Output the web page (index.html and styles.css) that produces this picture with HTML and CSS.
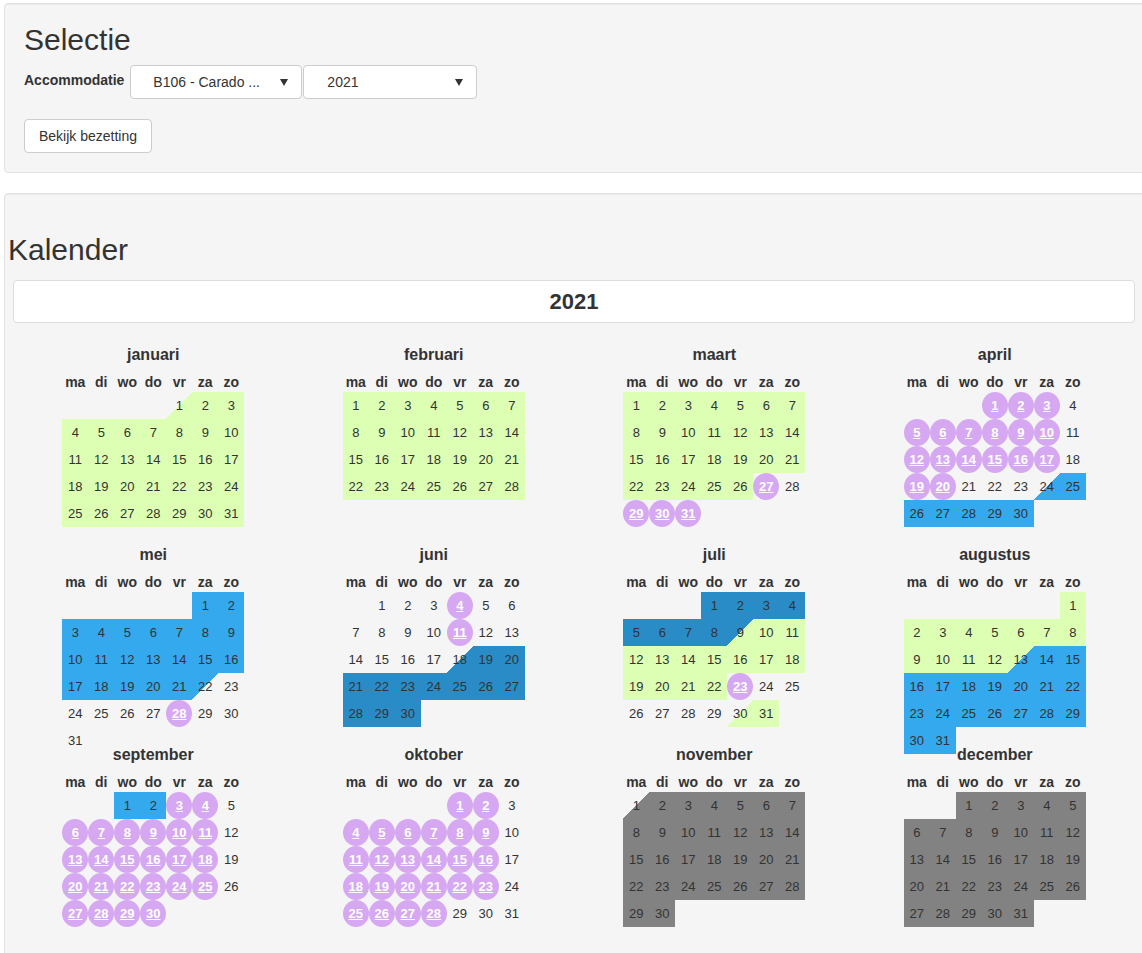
FILE: index.html
```html
<!DOCTYPE html>
<html lang="nl">
<head>
    <meta charset="UTF-8">
    <meta name="viewport" content="width=device-width, initial-scale=1.0">
    <title>Bezetting</title>
    <link rel="stylesheet" href="styles.css">
</head>
<body>
    <div class="well selection">
        <h2>Selectie</h2>
        <div class="form-row">
            <label>Accommodatie</label>
            <div class="select select-acc">
                <span>B106 - Carado ...</span>
                <span class="caret"></span>
            </div>
            <div class="select select-year">
                <span>2021</span>
                <span class="caret"></span>
            </div>
        </div>
        <button class="btn">Bekijk bezetting</button>
    </div>

    <div class="well kalender">
        <h2>Kalender</h2>
        <div class="calendar">
            <div class="calendar-header">2021</div>
            <div class="months-container" id="months"></div>
        </div>
    </div>

    <script>
        const YEAR = 2021;
        const MONTHS = ['januari', 'februari', 'maart', 'april', 'mei', 'juni',
            'juli', 'augustus', 'september', 'oktober', 'november', 'december'];
        const DAYS = ['ma', 'di', 'wo', 'do', 'vr', 'za', 'zo'];

        // boekingen: aankomst, vertrek, kleur
        const bookings = [
            [new Date(2021, 0, 1), new Date(2021, 2, 27), 'green'],
            [new Date(2021, 3, 24), new Date(2021, 4, 22), 'blue'],
            [new Date(2021, 5, 18), new Date(2021, 6, 9), 'dark'],
            [new Date(2021, 6, 9), new Date(2021, 6, 23), 'green'],
            [new Date(2021, 6, 30), new Date(2021, 7, 13), 'green'],
            [new Date(2021, 7, 13), new Date(2021, 8, 3), 'blue'],
            [new Date(2021, 10, 1), new Date(2022, 0, 8), 'gray']
        ];

        // geblokkeerde dagen (zondagen worden overgeslagen)
        const blocked = [
            [2, 27, 27], [2, 29, 31], [3, 1, 20], [4, 28, 28], [5, 4, 4],
            [5, 11, 11], [6, 23, 23], [8, 3, 30], [9, 1, 28]
        ];

        function isBlocked(date) {
            if (date.getDay() === 0) return false;
            return blocked.some(([m, from, to]) =>
                date.getMonth() === m && date.getDate() >= from && date.getDate() <= to);
        }

        function dayClasses(date) {
            const cls = ['day'];
            let split = false;
            bookings.forEach(([start, end, color]) => {
                if (date.getTime() === start.getTime()) {
                    cls.push('in-' + color);
                    split = true;
                } else if (date.getTime() === end.getTime()) {
                    cls.push('out-' + color);
                    split = true;
                } else if (date > start && date < end) {
                    cls.push('full-' + color);
                }
            });
            if (split) cls.push('split');
            return cls.join(' ');
        }

        function createMonth(m) {
            const first = new Date(YEAR, m, 1);
            const offset = (first.getDay() + 6) % 7;
            const total = new Date(YEAR, m + 1, 0).getDate();

            let html = '<table class="month"><tr><th colspan="7" class="month-title">' + MONTHS[m] + '</th></tr><tr>';
            DAYS.forEach(d => html += '<th class="day-header">' + d + '</th>');
            html += '</tr>';

            const cells = Math.ceil((offset + total) / 7) * 7;
            for (let i = 0; i < cells; i++) {
                if (i % 7 === 0) html += '<tr>';
                const day = i - offset + 1;
                if (day < 1 || day > total) {
                    html += '<td></td>';
                } else {
                    const date = new Date(YEAR, m, day);
                    if (isBlocked(date)) {
                        html += '<td class="day"><a class="busy" href="#">' + day + '</a></td>';
                    } else {
                        html += '<td class="' + dayClasses(date) + '">' + day + '</td>';
                    }
                }
                if (i % 7 === 6) html += '</tr>';
            }
            html += '</table>';

            const container = document.createElement('div');
            container.className = 'month-container';
            container.innerHTML = html;
            return container;
        }

        const months = document.getElementById('months');
        for (let m = 0; m < 12; m++) {
            months.appendChild(createMonth(m));
        }
    </script>
</body>
</html>
```

FILE: styles.css
```css
body {
    margin: 0;
    background: #fff;
    color: #333;
    font-family: 'Liberation Sans', Arial, sans-serif;
    font-size: 14px;
    overflow-x: hidden;
}

h2 {
    font-size: 30px;
    font-weight: normal;
    line-height: 33px;
    margin: 0;
}

.well {
    background: #f5f5f5;
    border: 1px solid #e3e3e3;
    border-radius: 4px;
    box-shadow: inset 0 1px 1px rgba(0, 0, 0, 0.05);
    margin-left: 4px;
    margin-right: -12px;
}

.selection {
    margin-top: 3px;
    padding: 19px 19px 19px 19px;
}

.form-row {
    display: flex;
    align-items: flex-start;
    margin-top: 9px;
}

.form-row label {
    font-weight: bold;
    line-height: 20px;
    padding-top: 5px;
    margin-right: 6px;
}

.select {
    box-sizing: border-box;
    height: 34px;
    background: #fff;
    border: 1px solid #ccc;
    border-radius: 4px;
    display: flex;
    align-items: center;
    justify-content: space-between;
    padding: 0 13px 0 22px;
}

.select-acc {
    width: 172px;
}

.select-year {
    width: 174px;
    margin-left: 1px;
    padding-left: 23px;
}

.caret {
    width: 0;
    height: 0;
    border-left: 4px solid transparent;
    border-right: 4px solid transparent;
    border-top: 7px solid #333;
    margin-top: 1px;
}

.btn {
    display: block;
    box-sizing: border-box;
    height: 34px;
    margin-top: 20px;
    padding: 0 14px;
    background: #fff;
    border: 1px solid #ccc;
    border-radius: 4px;
    color: #333;
    font-family: inherit;
    font-size: 14px;
}

.kalender {
    margin-top: 20px;
    padding: 39px 0 30px 3px;
}

.calendar {
    width: 1122px;
    margin: 14px 0 0 5px;
}

.calendar-header {
    box-sizing: border-box;
    height: 43px;
    line-height: 41px;
    background: #fff;
    border: 1px solid #ddd;
    border-radius: 4px;
    text-align: center;
    font-size: 22px;
    font-weight: bold;
    margin-bottom: 19px;
}

.months-container {
    display: grid;
    grid-template-columns: repeat(4, 1fr);
}

.month-container {
    height: 200px;
}

table.month {
    margin: 0 auto;
    border-spacing: 0;
    border-collapse: separate;
}

.month th,
.month td {
    padding: 0;
    text-align: center;
}

.month-title {
    font-size: 16px;
    font-weight: bold;
    height: 25px;
    line-height: 25px;
}

.day-header {
    font-size: 14px;
    font-weight: bold;
    width: 26px;
    height: 20px;
    line-height: 20px;
    padding-top: 5px !important;
    vertical-align: top;
}

.month td {
    width: 26px;
    height: 27px;
    line-height: 27px;
    font-size: 13px;
}

.full-green { background: #dcffb4; }
.full-blue { background: #34a9ee; }
.full-dark { background: #2a8cc7; }
.full-gray { background: #828282; }

.in-green { --bot: #dcffb4; }
.in-blue { --bot: #34a9ee; }
.in-dark { --bot: #2a8cc7; }
.in-gray { --bot: #828282; }

.out-green { --top: #dcffb4; }
.out-blue { --top: #34a9ee; }
.out-dark { --top: #2a8cc7; }
.out-gray { --top: #828282; }

.day.split {
    background: linear-gradient(to bottom right, var(--top, transparent) 50%, var(--bot, transparent) 50%);
}

.busy {
    display: block;
    width: 26px;
    height: 27px;
    border-radius: 50%;
    background: #d6a8f2;
    color: #fff;
    font-weight: bold;
    text-decoration: underline;
}
```
